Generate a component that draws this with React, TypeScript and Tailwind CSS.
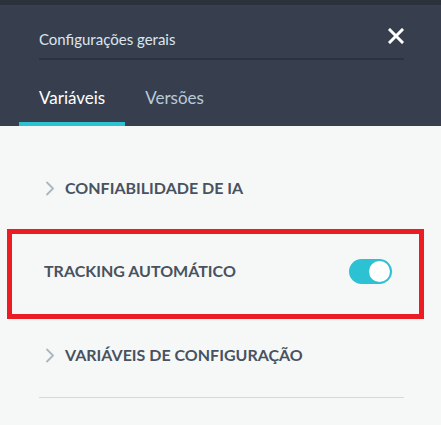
import { useState } from "react";

function Chevron() {
  return (
    <svg width="10" height="15" viewBox="0 0 10 15" fill="none" className="shrink-0">
      <path d="M2 1.5 L8 7.5 L2 13.5" stroke="#a8b7c1" strokeWidth="1.8" strokeLinecap="round" strokeLinejoin="round" />
    </svg>
  );
}

export default function App() {
  const [tab, setTab] = useState("vars");
  const [tracking, setTracking] = useState(true);

  return (
    <div className="w-[441px] h-[425px] overflow-hidden bg-[#f6f8f8]" style={{ fontFamily: "Lato, 'Open Sans', sans-serif" }}>
      <div className="h-[5px] bg-[#2c323c]" />

      {/* Header */}
      <div className="bg-[#373f4e] h-[121px] flex flex-col">
        <div className="mx-[39px] mr-[37px] h-[55px] flex items-end justify-between border-b-2 border-[#2c333e] pb-[11px]">
          <span className="text-[15px] text-[#dbe6f1] leading-none">Configurações gerais</span>
          <button className="text-white mb-[3px]" aria-label="Fechar">
            <svg width="16" height="16" viewBox="0 0 16 16">
              <path d="M2 2 L14 14 M14 2 L2 14" stroke="#ffffff" strokeWidth="3" strokeLinecap="square" />
            </svg>
          </button>
        </div>
        <div className="flex mt-auto pl-[19px]">
          <button
            onClick={() => setTab("vars")}
            className={`px-[20px] pb-[16px] border-b-4 text-[17px] leading-none ${tab === "vars" ? "border-[#2cc1d3] text-white" : "border-transparent text-[#b9cadb]"}`}
          >
            Variáveis
          </button>
          <button
            onClick={() => setTab("vers")}
            className={`px-[20px] pb-[16px] border-b-4 text-[17px] leading-none ${tab === "vers" ? "border-[#2cc1d3] text-white" : "border-transparent text-[#b9cadb]"}`}
          >
            Versões
          </button>
        </div>
      </div>

      {/* Body */}
      <div className="pt-[32px]">
        <div className="h-[60px] pl-[45px] flex items-center gap-[10px]">
          <Chevron />
          <span className="text-[16px] font-bold text-[#485260]">CONFIABILIDADE DE IA</span>
        </div>

        <div className="mt-[11px] ml-[7px] w-[417px] h-[90px] border-[5px] border-[#ec1c24] flex items-center justify-between pl-[32px] pr-[27px] pb-[6px]">
          <span className="text-[16px] font-bold text-[#485260]">TRACKING AUTOMÁTICO</span>
          <button
            onClick={() => setTracking(!tracking)}
            className={`w-[43px] h-[25px] rounded-full p-[2px] flex ${tracking ? "bg-[#2cc1d3] justify-end" : "bg-[#c4cfd6] justify-start"}`}
            aria-label="Tracking automático"
          >
            <span className="w-[21px] h-[21px] rounded-full bg-white" />
          </button>
        </div>

        <div className="h-[60px] mt-[6px] pl-[45px] flex items-center gap-[10px]">
          <Chevron />
          <span className="text-[16px] font-bold text-[#485260]">VARIÁVEIS DE CONFIGURAÇÃO</span>
        </div>

        <div className="mx-[39px] mr-[37px] mt-[12px] border-t border-[#d0dbe1]" />
      </div>
    </div>
  );
}
